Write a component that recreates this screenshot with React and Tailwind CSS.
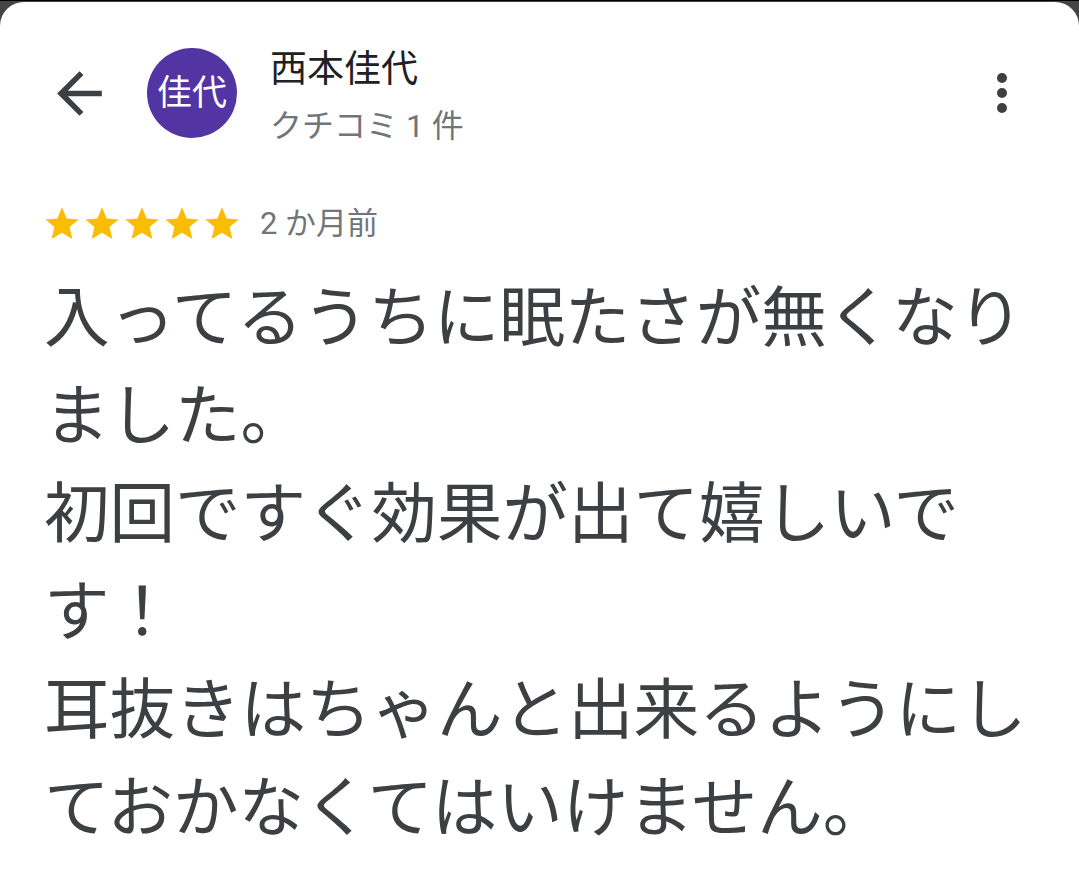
import React from "react";

const FONT = { fontFamily: '"Roboto", "Noto Sans CJK JP", sans-serif' };

function Star() {
  return (
    <svg viewBox="0 0 24 24" className="w-[40px] h-[40px] shrink-0" fill="#fbbc04">
      <path d="M12 17.27L18.18 21l-1.64-7.19L22 9.24l-7.19-.61L12 2 9.19 8.63 2 9.24l5.46 4.57L5.82 21z" />
    </svg>
  );
}

export default function App() {
  return (
    <div className="w-[1079px] h-[871px] bg-[#454545] border-t border-black overflow-hidden" style={FONT}>
      <div className="bg-white h-full rounded-t-[24px] mt-[1px] pt-[46px]">
        {/* Header */}
        <div className="flex items-start">
          <svg viewBox="0 0 24 24" className="w-[67px] h-[67px] ml-[46px] mt-[12px] shrink-0" fill="#3c4043">
            <path d="M20 11H7.83l5.59-5.59L12 4l-8 8 8 8 1.41-1.41L7.83 13H20v-2z" />
          </svg>
          <div className="ml-[34px] w-[90px] h-[90px] rounded-full bg-[#5234a2] flex items-center justify-center shrink-0">
            <span className="text-white text-[35px] leading-none">佳代</span>
          </div>
          <div className="ml-[33px] flex flex-col">
            <div className="text-[37px] leading-[44px] text-[#202124]">西本佳代</div>
            <div className="text-[32px] leading-[40px] text-[#70757a] mt-[14px]">クチコミ 1 件</div>
          </div>
          <div className="flex-1" />
          <svg viewBox="0 0 24 24" className="w-[60px] h-[60px] mr-[47px] mt-[15px] shrink-0" fill="#3c4043">
            <circle cx="12" cy="6" r="2" />
            <circle cx="12" cy="12" r="2" />
            <circle cx="12" cy="18" r="2" />
          </svg>
        </div>

        {/* Rating */}
        <div className="flex items-center mt-[58px] ml-[42px]">
          <div className="flex">
            <Star />
            <Star />
            <Star />
            <Star />
            <Star />
          </div>
          <span className="ml-[18px] text-[31px] leading-[40px] text-[#70757a]">2 か月前</span>
        </div>

        {/* Review text */}
        <div className="pl-[44px] pr-[40px] mt-[26px] text-[65.5px] leading-[98px] text-[#3c4043]">
          入ってるうちに眠たさが無くなりました。
          <br />
          初回ですぐ効果が出て嬉しいです！
          <br />
          耳抜きはちゃんと出来るようにしておかなくてはいけません。
        </div>
      </div>
    </div>
  );
}
